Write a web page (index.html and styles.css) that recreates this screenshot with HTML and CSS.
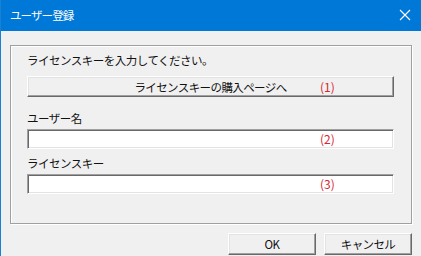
FILE: index.html
```html
<!DOCTYPE html>
<html lang="ja">
<head>
    <meta charset="UTF-8">
    <title>ユーザー登録</title>
    <link rel="stylesheet" href="styles.css">
</head>
<body>
    <div class="window">
        <div class="titlebar">
            <span class="title">ユーザー登録</span>
            <svg class="close" width="12" height="12" viewBox="0 0 12 12">
                <path d="M1 1 L11 11 M11 1 L1 11" stroke="#fff" stroke-width="1.1" fill="none"/>
            </svg>
        </div>
        <div class="content">
            <div class="group">
                <div class="label first">ライセンスキーを入力してください。</div>
                <div class="field">
                    <button class="btn wide">ライセンスキーの購入ページへ</button>
                    <span class="note">(1)</span>
                </div>
                <div class="label">ユーザー名</div>
                <div class="field">
                    <input class="textbox" type="text">
                    <span class="note">(2)</span>
                </div>
                <div class="label tight">ライセンスキー</div>
                <div class="field">
                    <input class="textbox" type="text">
                    <span class="note">(3)</span>
                </div>
            </div>
            <div class="footer">
                <button class="btn action">OK</button>
                <button class="btn action">キャンセル</button>
            </div>
        </div>
    </div>
</body>
</html>
```

FILE: styles.css
```css
body {
    margin: 0;
    padding: 0;
    background: #f0f0f0;
    font-family: "Noto Sans CJK JP", "Noto Sans", sans-serif;
    font-size: 11.5px;
    color: #111;
}

.window {
    width: 420px;
    height: 256px;
    border-left: 1px solid #1b7fd4;
    background: #f0f0f0;
}

.titlebar {
    height: 31px;
    background: #0078d7;
    display: flex;
    align-items: center;
    justify-content: space-between;
    padding: 0 10px 0 9px;
    color: #fff;
}

.title {
    font-size: 11.5px;
    letter-spacing: -0.9px;
    margin-top: -1px;
}

.close {
    margin-top: -1px;
}

.content {
    padding: 14px 9px 0 9px;
}

.group {
    height: 171px;
    border: 1px solid #a0a0a0;
    box-shadow: inset 1px 1px #fff, 1px 1px #fff;
    padding: 6px 16px 0 16px;
}

.label {
    height: 16px;
    line-height: 16px;
    letter-spacing: -0.5px;
    margin-top: 13px;
}

.label.first {
    margin-top: 0;
}

.label.tight {
    margin-top: 6px;
}

.field {
    position: relative;
    margin-top: 3px;
}

.label.first + .field {
    margin-top: 8px;
}

.btn {
    font-family: inherit;
    font-size: 11.5px;
    letter-spacing: -0.6px;
    color: #111;
    background: #f0f0f0;
    border: 1px solid;
    border-color: #fff #696969 #696969 #fff;
    box-shadow: inset -1px -1px #a0a0a0, inset 1px 1px #e3e3e3;
    padding: 0;
    display: block;
}

.btn.wide {
    width: 367px;
    height: 21px;
}

.textbox {
    display: block;
    box-sizing: border-box;
    width: 367px;
    height: 20px;
    margin: 0;
    padding: 0;
    background: #fff;
    border: 1px solid;
    border-color: #a0a0a0 #fff #fff #a0a0a0;
    box-shadow: inset 1px 1px #696969, inset -1px -1px #e3e3e3;
    outline: none;
}

.note {
    position: absolute;
    left: 293px;
    top: 50%;
    transform: translateY(-50%);
    color: #d9262f;
    font-size: 12px;
    line-height: 12px;
}

.footer {
    display: flex;
    justify-content: flex-end;
    gap: 8px;
    margin-top: 9px;
}

.btn.action {
    width: 88px;
    height: 22px;
}
```
